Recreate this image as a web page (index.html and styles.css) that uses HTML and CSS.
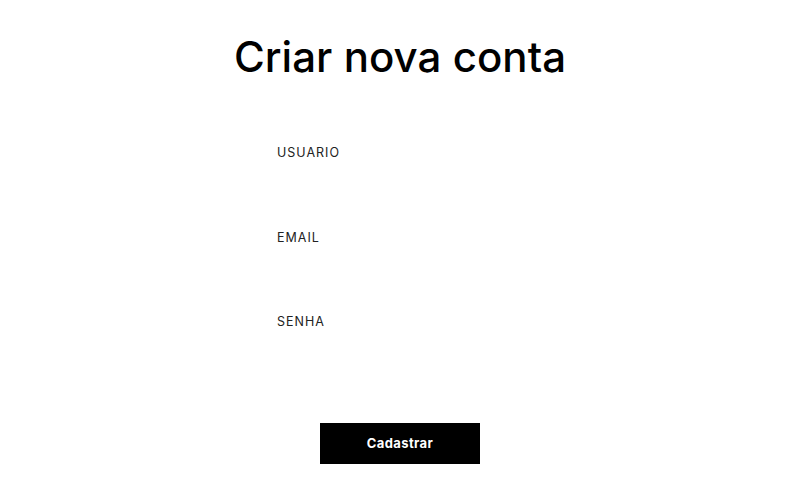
FILE: index.html
```html
<!DOCTYPE html>
<html lang="pt">
<head>
<meta charset="utf-8">
<title>Criar nova conta</title>
<link rel="stylesheet" href="styles.css">
</head>
<body>
<main class="page">
  <h1 class="title">Criar nova conta</h1>
  <form class="form">
    <div class="field">
      <label class="label" for="usuario">USUARIO</label>
      <input class="input" id="usuario" type="text">
    </div>
    <div class="field">
      <label class="label" for="email">EMAIL</label>
      <input class="input" id="email" type="email">
    </div>
    <div class="field">
      <label class="label" for="senha">SENHA</label>
      <input class="input" id="senha" type="password">
    </div>
    <button class="btn" type="button">Cadastrar</button>
  </form>
</main>
</body>
</html>
```

FILE: styles.css
```css
* { box-sizing: border-box; }
html, body { margin: 0; padding: 0; background: #ffffff; }
body { font-family: "Inter", "Noto Sans", sans-serif; color: #000; }
.page {
  width: 800px;
  height: 500px;
  display: flex;
  flex-direction: column;
  align-items: center;
  padding-top: 29px;
}
.title {
  margin: 0;
  font-size: 42px;
  line-height: 56px;
  font-weight: 500;
  letter-spacing: 0.05px;
  color: #000;
}
.form {
  width: 246px;
  margin-top: 60px;
  display: flex;
  flex-direction: column;
}
.field {
  display: flex;
  flex-direction: column;
  height: 84.5px;
}
.label {
  font-size: 12.5px;
  line-height: 16px;
  letter-spacing: 1px;
  color: #222;
  font-weight: 400;
}
.input {
  border: none;
  background: transparent;
  outline: none;
  height: 40px;
  margin-top: 8px;
  font: inherit;
}
.btn {
  align-self: center;
  margin-top: 24px;
  width: 160px;
  height: 41px;
  border: none;
  background: #000;
  color: #fff;
  font-family: "Inter", "Noto Sans", sans-serif;
  font-weight: 700;
  font-size: 13px;
  letter-spacing: 0.4px;
}
```
